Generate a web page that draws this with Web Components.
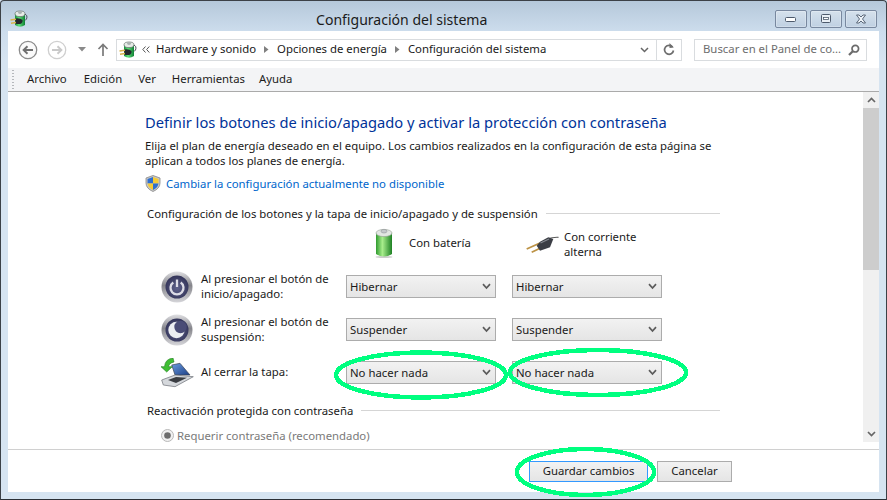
<!DOCTYPE html>
<html lang="es">
<head>
<meta charset="utf-8">
<title>Configuración del sistema</title>
<style>
  html, body { margin: 0; padding: 0; height: 100%; overflow: hidden; background: #d4e2f0; }
  body { font: 11.35px "Noto Sans", "Open Sans", sans-serif; color: #1a1a1a; }
</style>
</head>
<body>
<win-frame>
  <title-bar slot="title">Configuración del sistema</title-bar>
  <nav-bar slot="nav"></nav-bar>
  <menu-bar slot="menu"></menu-bar>
  <power-page slot="page"></power-page>
  <foot-bar slot="foot"></foot-bar>
</win-frame>
<mark-up></mark-up>

<script>
// icons shared by several elements
var ICON_PLUGGREEN = `
  <svg width="18" height="18" viewBox="0 0 18 18">
    <defs><linearGradient id="cg" x1="0" x2="1" y1="0" y2="0">
      <stop offset="0" stop-color="#12903a"/><stop offset=".4" stop-color="#5fe078"/><stop offset="1" stop-color="#0f8034"/>
    </linearGradient></defs>
    <path d="M14.500 4 Q18 5 16.500 9 Q15.500 11 13 10.500" fill="none" stroke="#4a5058" stroke-width="1"/>
    <path d="M5 4 V15 Q10 18.500 15 15 V4Z" fill="url(#cg)"/>
    <ellipse cx="10" cy="3.800" rx="5" ry="2.800" fill="#e6ebe6" stroke="#64706a" stroke-width=".7"/>
    <ellipse cx="10" cy="2.600" rx="2" ry="1.300" fill="#a9b0b0"/>
    <path d="M5 8.500 Q10 7.500 12.500 10 Q13 13 10 14 H5.500Z" fill="#24272c"/>
    <path d="M0.500 10 L6 9.300 M1 13.200 L6 12.500" stroke="#d9b44a" stroke-width="1.500"/>
  </svg>`;

class WinFrame extends HTMLElement {
  connectedCallback() {
    this.attachShadow({mode: 'open'}).innerHTML = `
      <style>
        :host { display: flex; flex-direction: column; width: 887px; height: 500px; box-sizing: border-box;
          border: 1px solid #3c4147; border-bottom-color: #2b3036; border-radius: 4px 4px 0 0;
          background: linear-gradient(#b5c8da 0, #cddded 31px, #d6e4f1 60px); }
        .client { display: flex; flex-direction: column; flex: 1; margin: 0 7px 7px 7px; background: #fff; min-height: 0; }
      </style>
      <slot name="title"></slot>
      <div class="client">
        <slot name="nav"></slot>
        <slot name="menu"></slot>
        <slot name="page"></slot>
        <slot name="foot"></slot>
      </div>`;
  }
}
customElements.define('win-frame', WinFrame);

class TitleBar extends HTMLElement {
  connectedCallback() {
    this.attachShadow({mode: 'open'}).innerHTML = `
      <style>
        :host { display: flex; height: 30px; flex: none; align-items: flex-start; }
        .ic { margin: 9px 0 0 9px; width: 18px; height: 18px; }
        .t { margin: 9px 0 0 288px; font-size: 14.050px; line-height: 20px; color: #1b1b1b; white-space: nowrap; }
        .btns { margin: 9px 0 0 auto; padding-right: 9px; display: flex; gap: 3px; }
        .b { width: 30px; height: 16px; border: 1px solid #78889f; border-radius: 2px;
          background: linear-gradient(#d5e1ec, #bfd0e2); display: flex; align-items: center; justify-content: center;
          box-shadow: inset 0 0 0 1px rgba(255,255,255,.25); }
      </style>
      <span class="ic">${ICON_PLUGGREEN}</span>
      <span class="t"><slot></slot></span>
      <div class="btns">
        <div class="b"><svg width="12" height="8" viewBox="0 0 12 8"><rect x=".5" y="2.5" width="10" height="4" rx="1" fill="#fff" stroke="#4d5a6c"/></svg></div>
        <div class="b"><svg width="12" height="10" viewBox="0 0 12 10"><rect x="1.5" y=".5" width="9" height="8" rx="1" fill="#e9eff5" stroke="#4d5a6c"/><rect x="3.5" y="3.5" width="5" height="2" fill="#fff" stroke="#4d5a6c" stroke-width=".8"/></svg></div>
        <div class="b"><svg width="14" height="10" viewBox="0 0 14 10"><path d="M2.5 1 H5 L7 3 L9 1 H11.5 L8.5 5 L11.5 9 H9 L7 7 L5 9 H2.5 L5.500 5Z" fill="#eef3f8" stroke="#4d5a6c" stroke-width=".9"/></svg></div>
      </div>`;
  }
}
customElements.define('title-bar', TitleBar);

class NavBar extends HTMLElement {
  connectedCallback() {
    this.attachShadow({mode: 'open'}).innerHTML = `
      <style>
        :host { display: flex; height: 37px; flex: none; align-items: center; box-sizing: border-box; padding: 0 12px 0 10px; }
        svg { display: block; flex: none; }
        .navs { display: flex; align-items: center; width: 98px; flex: none; }
        .addr { flex: 1; height: 22px; box-sizing: border-box; border: 1px solid #d9dcdf; display: flex; align-items: center;
          margin-right: 12px; white-space: nowrap; }
        .tx { padding-bottom: 2px; }
        .sep { margin: 0 8px; }
        .end { margin-left: auto; display: flex; align-items: center; height: 100%; }
        .rf { border-left: 1px solid #d9dcdf; width: 24px; height: 100%; display: flex; align-items: center; justify-content: center; margin-left: 7px; }
        .search { width: 173px; height: 22px; box-sizing: border-box; border: 1px solid #d9dcdf; display: flex; align-items: center;
          padding: 0 6px 0 8px; color: #6d6d6d; white-space: nowrap; }
        .search svg { margin-left: auto; }
      </style>
      <div class="navs">
        <svg width="20" height="20" viewBox="0 0 20 20"><circle cx="10" cy="10" r="8.700" fill="#fafafa" stroke="#8b8b8b" stroke-width="1.300"/><path d="M15 10 H6 M9.500 6.200 L5.600 10 L9.500 13.800" fill="none" stroke="#6f6f6f" stroke-width="1.900"/></svg>
        <svg style="margin-left:9px" width="20" height="20" viewBox="0 0 20 20"><circle cx="10" cy="10" r="8.700" fill="#fff" stroke="#cfcfcf" stroke-width="1.300"/><path d="M5 10 H14 M10.500 6.200 L14.400 10 L10.500 13.800" fill="none" stroke="#c9c9c9" stroke-width="1.900"/></svg>
        <svg style="margin-left:11px" width="8" height="5" viewBox="0 0 8 5"><path d="M0 0 H8 L4 4.500Z" fill="#8a8a8a"/></svg>
        <svg style="margin-left:11px" width="12" height="14" viewBox="0 0 12 14"><path d="M6 13 V2 M1.500 6 L6 1.500 L10.500 6" fill="none" stroke="#7a7a7a" stroke-width="1.700"/></svg>
      </div>
      <div class="addr">
        <span style="margin:0 5px 0 2px">${ICON_PLUGGREEN}</span>
        <svg width="8" height="7" viewBox="0 0 8 7"><path d="M3.500 .5 L.8 3.500 L3.500 6.500 M7.300 .5 L4.600 3.500 L7.300 6.500" fill="none" stroke="#555" stroke-width="1"/></svg>
        <span class="tx" style="margin-left:6px">Hardware y sonido</span>
        <svg class="sep" width="5" height="7" viewBox="0 0 5 7"><path d="M0 0 L4.500 3.500 L0 7Z" fill="#808080"/></svg>
        <span class="tx">Opciones de energía</span>
        <svg class="sep" width="5" height="7" viewBox="0 0 5 7"><path d="M0 0 L4.500 3.500 L0 7Z" fill="#808080"/></svg>
        <span class="tx">Configuración del sistema</span>
        <div class="end">
          <svg width="9" height="6" viewBox="0 0 9 6"><path d="M1 1 L4.500 4.500 L8 1" fill="none" stroke="#666" stroke-width="1.500"/></svg>
          <div class="rf"><svg width="12" height="13" viewBox="0 0 12 13"><path d="M9.600 4 A4.500 4.500 0 1 0 10.500 7.500" fill="none" stroke="#6d6d6d" stroke-width="1.700"/><path d="M6.500 0 V5 L10.800 4.500Z" fill="#6d6d6d"/></svg></div>
        </div>
      </div>
      <div class="search">
        <span class="tx">Buscar en el Panel de co...</span>
        <svg width="12" height="12" viewBox="0 0 12 12"><circle cx="7.300" cy="4.700" r="3.300" fill="none" stroke="#6b6b6b" stroke-width="1.700"/><path d="M4.800 7.200 L1 11" stroke="#6b6b6b" stroke-width="2.200"/></svg>
      </div>`;
  }
}
customElements.define('nav-bar', NavBar);

class MenuBar extends HTMLElement {
  connectedCallback() {
    this.attachShadow({mode: 'open'}).innerHTML = `
      <style>
        :host { display: flex; height: 24px; flex: none; align-items: center; box-sizing: border-box;
          background: #f3f4f6; border-bottom: 1px solid #aaaaaa; padding-left: 4px; }
        .grip { width: 2px; height: 19px; margin-right: 13px;
          background: repeating-linear-gradient(#b5b8bc 0 1px, transparent 1px 3px); }
        span { margin-right: 16px; padding-bottom: 2px; color: #1c1c1c; }
      </style>
      <div class="grip"></div>
      <span style="margin-right:17px">Archivo</span><span>Edición</span><span>Ver</span><span style="margin-right:14px">Herramientas</span><span>Ayuda</span>`;
  }
}
customElements.define('menu-bar', MenuBar);

class WinSelect extends HTMLElement {
  connectedCallback() {
    this.attachShadow({mode: 'open'}).innerHTML = `
      <style>
        :host { display: flex; align-items: center; width: 150px; height: 23px; box-sizing: border-box;
          border: 1px solid #acacac; background: linear-gradient(#f2f2f2, #e5e5e5); padding: 0 4px 0 3px; color: #1a1a1a; }
        svg { margin-left: auto; }
      </style>
      <slot></slot>
      <svg width="9" height="7" viewBox="0 0 9 7"><path d="M1 1.200 L4.500 5 L8 1.200" fill="none" stroke="#5c5c5c" stroke-width="1.700"/></svg>`;
  }
}
customElements.define('win-select', WinSelect);

class GroupHead extends HTMLElement {
  connectedCallback() {
    this.attachShadow({mode: 'open'}).innerHTML = `
      <style>
        :host { display: flex; align-items: center; width: 573px; margin-left: 2px; white-space: nowrap; }
        i { flex: 1; height: 1px; background: #d5d5d5; margin-left: 8px; }
      </style>
      <slot></slot><i></i>`;
  }
}
customElements.define('group-head', GroupHead);

class PowerRow extends HTMLElement {
  connectedCallback() {
    this.attachShadow({mode: 'open'}).innerHTML = `
      <style>
        :host { display: grid; grid-template-columns: 40px 145px 166px 150px; align-items: center; margin-left: 16px; height: 43px; line-height: 15px; }
        ::slotted([slot=icon]) { display: block; }
        .lb { margin-top: -1px; }
      </style>
      <slot name="icon"></slot>
      <div class="lb"><slot name="label"></slot></div>
      <slot name="a"></slot>
      <slot name="b"></slot>`;
  }
}
customElements.define('power-row', PowerRow);

class PowerPage extends HTMLElement {
  connectedCallback() {
    var orb = function(inner) {
      return `<svg slot="icon" width="32" height="32" viewBox="0 0 32 32">
        <defs>
          <linearGradient id="rg" x1="0" x2="0" y1="0" y2="1"><stop offset="0" stop-color="#e0e0e3"/><stop offset=".45" stop-color="#85858b"/><stop offset="1" stop-color="#d6d6da"/></linearGradient>
          <radialGradient id="fg" cx=".5" cy=".55" r=".6"><stop offset="0" stop-color="#5f628c"/><stop offset="1" stop-color="#2f3054"/></radialGradient>
        </defs>
        <circle cx="16" cy="16" r="15.500" fill="url(#rg)"/>
        <circle cx="16" cy="16" r="11.500" fill="url(#fg)"/>
        ${inner}</svg>`;
    };
    this.attachShadow({mode: 'open'}).innerHTML = `
      <style>
        :host { display: flex; flex: 1; min-height: 0; overflow: hidden; }
        .body { flex: 1; padding: 20px 0 0 137px; overflow: hidden; line-height: 15px; }
        h1 { margin: 0; font-weight: 400; font-size: 14.700px; line-height: 20px; color: #003399; white-space: nowrap; }
        p { margin: 6px 0 0; width: 575px; }
        .link { display: flex; align-items: center; margin-top: 6px; height: 18px; color: #0066cc; }
        .link svg { margin-right: 5px; }
        .col { display: flex; align-items: center; height: 40px; }
        .ra { display: flex; align-items: center; margin: 10px 0 0 16px; color: #7a7a7a; }
        .ra svg { margin-right: 3px; }
        .bar { width: 16px; flex: none; background: #f0f0f0; display: flex; flex-direction: column; align-items: center; }
        .thumb { width: 16px; height: 162px; background: #cdcdcd; }
        .ar { height: 16px; display: flex; align-items: center; justify-content: center; flex: none; }
      </style>
      <div class="body">
        <h1>Definir los botones de inicio/apagado y activar la protección con contraseña</h1>
        <p>Elija el plan de energía deseado en el equipo. Los cambios realizados en la configuración de esta página se aplican a todos los planes de energía.</p>
        <div class="link">
          <svg width="16" height="17" viewBox="0 0 16 17"><path d="M8 .5 L15 3 V8 Q15 13.500 8 16.500 Q1 13.500 1 8 V3Z" fill="#c8c8c8" stroke="#888" stroke-width=".8"/><path d="M8 2 V8.500 H2.500 V4Z" fill="#2f6fcf"/><path d="M8 2 L13.500 4 V8.500 H8Z" fill="#f6cb35"/><path d="M2.500 8.500 H8 V15 Q3.500 13 2.500 8.500Z" fill="#f6cb35"/><path d="M8 8.500 H13.500 Q12.500 13 8 15Z" fill="#2f6fcf"/></svg>
          <span>Cambiar la configuración actualmente no disponible</span>
        </div>
        <group-head style="margin-top:14px;height:15px">Configuración de los botones y la tapa de inicio/apagado y de suspensión</group-head>
        <div class="col" style="padding-left:230px">
          <svg width="18" height="30" viewBox="0 0 18 30" style="flex:none;margin-top:4px">
            <defs><linearGradient id="bg" x1="0" x2="1" y1="0" y2="0"><stop offset="0" stop-color="#2f9a2f"/><stop offset=".4" stop-color="#a8ee8c"/><stop offset="1" stop-color="#1e8124"/></linearGradient></defs>
            <ellipse cx="9" cy="29" rx="8.500" ry="1" fill="#ccc"/>
            <path d="M1 5 V26 Q9 31 17 26 V5Z" fill="url(#bg)"/>
            <ellipse cx="9" cy="5" rx="8" ry="3.600" fill="#e2e6e2" stroke="#94a094" stroke-width=".6"/>
            <ellipse cx="9" cy="3.200" rx="3" ry="1.800" fill="#c4c8cb" stroke="#8a8f92" stroke-width=".5"/>
          </svg>
          <span style="margin:2px 0 0 16px;width:117px;flex:none">Con batería</span>
          <svg width="33" height="20" viewBox="0 0 33 20" style="flex:none;margin-top:6px">
            <path d="M21 5 Q27 3 32.500 3.300" fill="none" stroke="#5a5a5a" stroke-width="1.200"/>
            <path d="M.7 15 L14 9" stroke="#bd9346" stroke-width="1.800"/>
            <path d="M5.700 18.300 L14 14.300" stroke="#bd9346" stroke-width="1.800"/>
            <path d="M14 7.700 L22.300 3.300 L27.300 5 L24 13.300 L14 16.700 L10.700 11.700Z" fill="#3b3e45"/>
            <path d="M14.500 9 L23 5" stroke="#868a91" stroke-width="1.200"/>
          </svg>
          <span style="margin:5px 0 0 5px;width:90px">Con corriente alterna</span>
        </div>
        <power-row style="margin-top:4px">
          ${orb('<path d="M12.300 11.500 A6.500 6.500 0 1 0 19.700 11.500" fill="none" stroke="#dcdce6" stroke-width="2.300"/><path d="M16 8.500 V16" stroke="#dcdce6" stroke-width="2.300"/>')}
          <span slot="label">Al presionar el botón de inicio/apagado:</span>
          <win-select slot="a">Hibernar</win-select>
          <win-select slot="b">Hibernar</win-select>
        </power-row>
        <power-row>
          ${orb('<circle cx="15.500" cy="16" r="8.200" fill="#eceef2"/><circle cx="19.500" cy="13" r="6.200" fill="#4a4c76"/>')}
          <span slot="label">Al presionar el botón de suspensión:</span>
          <win-select slot="a">Suspender</win-select>
          <win-select slot="b">Suspender</win-select>
        </power-row>
        <power-row>
          <svg slot="icon" width="33" height="30" viewBox="0 0 33 30">
            <defs><linearGradient id="sc" x1="0" x2="1" y1="0" y2="1"><stop offset="0" stop-color="#6a9be0"/><stop offset="1" stop-color="#1c3f86"/></linearGradient></defs>
            <path d="M10.700 7 L19 5.300 L29 17 L14 17Z" fill="url(#sc)" stroke="#3d4654" stroke-width=".7"/>
            <path d="M.7 22 L14 17 L32.300 18.700 L14 28.700 L2.300 27Z" fill="#d5d8dc" stroke="#6b6f75" stroke-width=".7"/>
            <path d="M7 22 L15 19 L26 19.800 L15 25Z" fill="#3a3d42"/>
            <path d="M12 0 Q4 1 3.500 8.700 H0 L5.700 14 L11.300 8.700 H7.500 Q8 5 13 4Z" fill="#3fbf33" stroke="#1f7a1f" stroke-width=".6"/>
          </svg>
          <span slot="label" style="position:relative;top:-1px">Al cerrar la tapa:</span>
          <win-select slot="a">No hacer nada</win-select>
          <win-select slot="b">No hacer nada</win-select>
        </power-row>
        <group-head style="margin-top:9px;height:15px">Reactivación protegida con contraseña</group-head>
        <div class="ra">
          <svg width="13" height="13" viewBox="0 0 13 13"><circle cx="6.500" cy="6.500" r="6" fill="#f0f0f0" stroke="#b8b8b8"/><circle cx="6.500" cy="6.500" r="3.300" fill="#6d6d6d"/></svg>
          <span>Requerir contraseña (recomendado)</span>
        </div>
      </div>
      <div class="bar">
        <div class="ar"><svg width="9" height="6" viewBox="0 0 9 6"><path d="M1 5 L4.500 1.500 L8 5" fill="none" stroke="#666" stroke-width="1.700"/></svg></div>
        <div class="thumb"></div>
        <div style="flex:1"></div>
        <div class="ar"><svg width="9" height="6" viewBox="0 0 9 6"><path d="M1 1 L4.500 4.500 L8 1" fill="none" stroke="#666" stroke-width="1.700"/></svg></div>
        <div style="height:7px;width:16px;background:#fff"></div>
      </div>`;
  }
}
customElements.define('power-page', PowerPage);

class FootBar extends HTMLElement {
  connectedCallback() {
    this.attachShadow({mode: 'open'}).innerHTML = `
      <style>
        :host { display: flex; justify-content: flex-end; flex: none; height: 43px; box-sizing: border-box;
          border-top: 1px solid #d0d0d0; padding: 11px 147px 0 0; gap: 9px; }
        .btn { height: 21px; box-sizing: border-box; border: 1px solid #acacac; background: linear-gradient(#f2f2f2, #e5e5e5);
          display: flex; align-items: center; justify-content: center; color: #1a1a1a; padding-bottom: 2px; }
        .def { width: 119px; border-color: #3399ff; }
        .cn { width: 75px; }
      </style>
      <div class="btn def">Guardar cambios</div>
      <div class="btn cn">Cancelar</div>`;
  }
}
customElements.define('foot-bar', FootBar);

// the green rings someone painted over the screenshot
class MarkUp extends HTMLElement {
  connectedCallback() {
    this.attachShadow({mode: 'open'}).innerHTML = `
      <style>
        :host { position: absolute; left: 0; top: 0; width: 887px; height: 500px; pointer-events: none; }
        ellipse { fill: none; stroke: #00ff80; stroke-width: 4.500; shape-rendering: crispEdges; }
      </style>
      <svg width="887" height="500">
        <ellipse cx="421" cy="375" rx="85" ry="22.500"/>
        <ellipse cx="598" cy="372.500" rx="88" ry="22.500"/>
        <ellipse cx="585.500" cy="472" rx="68.500" ry="23"/>
      </svg>`;
  }
}
customElements.define('mark-up', MarkUp);
</script>
</body>
</html>
